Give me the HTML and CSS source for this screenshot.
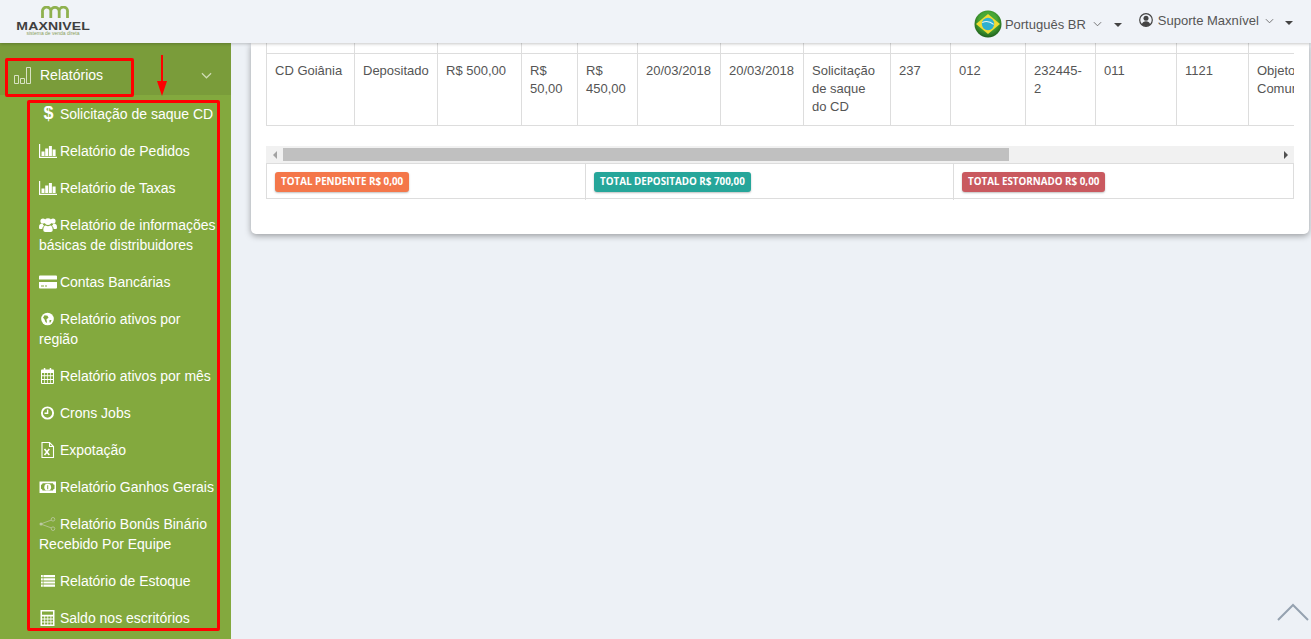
FILE: index.html
```html
<!DOCTYPE html>
<html lang="pt-BR">
<head>
<meta charset="utf-8">
<title>Maxnível</title>
<link rel="stylesheet" href="styles.css">
</head>
<body>
<div class="app">
  <header class="topbar">
    <div class="logo">
      <svg class="logo-mark" viewBox="0 0 28 12"><path d="M1.500 12V6a3.800 3.800 0 0 1 8.300-1.500M9.800 12V5.500a4.200 4.200 0 0 1 8.400 0V12M18.200 4.500A3.800 3.800 0 0 1 26.500 6v6" fill="none" stroke="#8fb14f" stroke-width="2.800"/></svg>
      <span class="logo-name">MAXNIVEL</span>
      <span class="logo-sub">sistema de venda direta</span>
    </div>
    <div class="top-right">
      <div class="top-item lang">
        <svg class="flag" viewBox="0 0 28 28"><defs><radialGradient id="flagbg" cx="50%" cy="40%" r="60%"><stop offset="55%" stop-color="#49a835"/><stop offset="100%" stop-color="#1f5f1c"/></radialGradient></defs><circle cx="14" cy="14" r="13.500" fill="url(#flagbg)"/><path d="M14 4 26 14 14 24 2 14z" fill="#f0dc33"/><circle cx="14" cy="14" r="6.200" fill="#2fb0cf"/><path d="M8.200 12.500c3.500-1.500 8-1 11.400 1.800" fill="none" stroke="#e8f6f4" stroke-width="1.100"/></svg>
        <span>Português BR</span>
        <svg class="chev-sm" viewBox="0 0 10 6"><path d="M1 1l4 4 4-4" fill="none" stroke="currentColor"/></svg>
        <span class="caret"></span>
      </div>
      <div class="top-item user">
        <svg class="user-ico" viewBox="0 0 14 14"><circle cx="7" cy="7" r="6.300" fill="none" stroke="#444" stroke-width="1.200"/><circle cx="7" cy="5.300" r="2.500" fill="#444"/><path d="M2.700 11.500c.7-2.600 2.500-3.300 4.300-3.300s3.600.7 4.300 3.300a6 6 0 0 1-8.600 0z" fill="#444"/></svg>
        <span>Suporte Maxnível</span>
        <svg class="chev-sm" viewBox="0 0 10 6"><path d="M1 1l4 4 4-4" fill="none" stroke="currentColor"/></svg>
        <span class="caret"></span>
      </div>
    </div>
  </header>
  <div class="layout">
    <aside class="sidebar">
      <div class="menu-head">
        <svg class="head-ico" viewBox="0 0 17 17"><path d="M.5 8.500h4v8h-4zM6.500 11.500h4v5h-4zM12.500 .5h4v16h-4z" fill="none" stroke="#d9e2c4"/></svg>
        <span class="head-label">Relatórios</span>
        <svg class="head-chev" viewBox="0 0 12 7"><path d="M1 1l5 5 5-5" fill="none" stroke="#cfdcb3" stroke-width="1.300"/></svg>
      </div>
      <ul class="submenu">
        <li><span class="ico glyph">$</span> Solicitação de saque CD</li>
        <li><svg class="ico" viewBox="0 0 18 14"><path d="M0 0h1.200v12.800H18V14H0zM2.500 7.500h3V12h-3zM6.200 4.500h3V12h-3zM9.900 2h3v10h-3zM13.600 5.500h3V12h-3z"/></svg> Relatório de Pedidos</li>
        <li><svg class="ico" viewBox="0 0 18 14"><path d="M0 0h1.200v12.800H18V14H0zM2.500 7.500h3V12h-3zM6.200 4.500h3V12h-3zM9.900 2h3v10h-3zM13.600 5.500h3V12h-3z"/></svg> Relatório de Taxas</li>
        <li><svg class="ico" viewBox="0 0 18 14"><circle cx="4" cy="3" r="2.600"/><circle cx="14" cy="3" r="2.600"/><circle cx="9" cy="3.600" r="3.400"/><path d="M0 9.500C0 6.500 1 5.500 3.500 5.500c.5 1.300 1 1.800 1.800 2.300C3.800 8.500 3.300 10 3.300 11H1c-.6 0-1-.7-1-1.500zM18 9.500c0-3-1-4-3.500-4-.5 1.300-1 1.800-1.800 2.300 1.500.7 2 2.200 2 3.200H17c.6 0 1-.7 1-1.500zM4.300 12c0-3 1-4.500 2.500-4.500 1.400 1 3 1 4.400 0 1.500 0 2.500 1.500 2.500 4.500 0 1.200-.7 2-2 2H6.300c-1.300 0-2-.8-2-2z"/></svg> Relatório de informações básicas de distribuidores</li>
        <li><svg class="ico" viewBox="0 0 18 14"><path d="M1 .5h16a1 1 0 0 1 1 1v3H0v-3a1 1 0 0 1 1-1zM0 7h18v5.500a1 1 0 0 1-1 1H1a1 1 0 0 1-1-1zm2 3.500v1h3v-1zm4 0v1h2v-1z" fill-rule="evenodd"/></svg> Contas Bancárias</li>
        <li><svg class="ico" viewBox="0 0 18 14"><circle cx="8.500" cy="7" r="6.300"/><path d="M5.500 3.200l3 .5 1 2-2 1.500L8 11 6.500 10 5.300 7 4 5.700zM10.500 8h2l-1 2.500h-1z" fill="#83a93e"/></svg> Relatório ativos por região</li>
        <li><svg class="ico ico-tall" viewBox="0 0 18 16"><path d="M3 1.500h11a1 1 0 0 1 1 1V15a1 1 0 0 1-1 1H3a1 1 0 0 1-1-1V2.500a1 1 0 0 1 1-1z"/><path d="M4.800 0h1.500v3H4.800zM10.700 0h1.500v3h-1.500z"/><path d="M3 5h2.300v2.300H3zm3 0h2.300v2.300H6zm3 0h2.300v2.300H9zm3 0h2v2.300h-2zM3 8.200h2.300v2.800H3zm3 0h2.300v2.800H6zm3 0h2.300v2.800H9zm3 0h2v2.800h-2zM3 12h2.300v3H3zm3 0h2.300v3H6zm3 0h2.300v3H9zm3 0h2v3h-2z" fill="#83a93e"/></svg> Relatório ativos por mês</li>
        <li><svg class="ico" viewBox="0 0 18 14"><circle cx="8.500" cy="7" r="5.600" fill="none" stroke="currentColor" stroke-width="1.900"/><path d="M9.300 3.500v4.500H5.500V6.600h2.400V3.500z"/></svg> Crons Jobs</li>
        <li><svg class="ico ico-tall" viewBox="0 0 18 16"><path d="M3 .5h7.500l4 4v11H3zM10.500 .5v4h4" fill="none" stroke="currentColor" stroke-width="1.100"/><path d="M5.500 7l4.800 6M10.300 7l-4.800 6" stroke="currentColor" stroke-width="1.600"/></svg> Expotação</li>
        <li><svg class="ico" viewBox="0 0 18 14"><path d="M.5 1.500h16.500V13H.5zm3 1.800c0 1-1 1.500-1.500 1.500v4c.7 0 1.500.7 1.500 1.800h10.500c0-1.100.8-1.800 1.500-1.800v-4c-.5 0-1.500-.5-1.500-1.500z" fill-rule="evenodd"/><circle cx="8.700" cy="7.200" r="3.400"/><path d="M8.200 5.200h1v4h-1z" fill="#83a93e"/></svg> Relatório Ganhos Gerais</li>
        <li><svg class="ico ico-muted" viewBox="0 0 18 14"><circle cx="14" cy="2.300" r="1.800" fill="none" stroke="currentColor" stroke-width=".8"/><circle cx="14" cy="11.700" r="1.800" fill="none" stroke="currentColor" stroke-width=".8"/><circle cx="2" cy="7" r="1.500"/><path d="M3 6.500l9.500-3.500M3 7.500l9.500 3.500" stroke="currentColor" stroke-width=".8"/></svg> Relatório Bonûs Binário Recebido Por Equipe</li>
        <li><svg class="ico" viewBox="0 0 18 14"><path d="M2 1h1.800v2.200H2zM4.400 1H16v2.200H4.400zM2 4.200h1.800v2.200H2zM4.400 4.200H16v2.200H4.400zM2 7.400h1.800v2.200H2zM4.400 7.400H16v2.200H4.400zM2 10.600h1.800v2.200H2zM4.400 10.600H16v2.200H4.400z"/></svg> Relatório de Estoque</li>
        <li><svg class="ico ico-tall" viewBox="0 0 18 16"><path d="M1.500 0h14v16h-14z"/><path d="M3 1.500h11v3.300H3zM3 6.500h2.300v2H3zm3.100 0h2.300v2H6.100zm3.100 0h2.300v2H9.200zm3.100 0H14v2h-1.700zM3 9.500h2.300v2H3zm3.100 0h2.300v2H6.100zm3.100 0h2.300v2H9.200zm3.100 0H14v2h-1.700zM3 12.500h2.300v2H3zm3.100 0h2.300v2H6.100zm3.100 0h2.300v2H9.200zm3.100 0H14v2h-1.700z" fill="#83a93e"/></svg> Saldo nos escritórios</li>
      </ul>
    </aside>
    <main class="content">
      <section class="card">
        <div class="table-clip">
          <table class="data">
            <colgroup><col><col><col><col><col><col><col><col><col><col><col><col><col><col></colgroup>
            <tbody>
              <tr class="stub"><td></td><td></td><td></td><td></td><td></td><td></td><td></td><td></td><td></td><td></td><td></td><td></td><td></td><td></td></tr>
              <tr>
                <td>CD Goiânia</td><td>Depositado</td><td>R$ 500,00</td><td>R$ 50,00</td><td>R$ 450,00</td><td>20/03/2018</td><td>20/03/2018</td><td>Solicitação de saque do CD</td><td>237</td><td>012</td><td>232445-2</td><td>011</td><td>1121</td><td>Objeto Comum</td>
              </tr>
            </tbody>
          </table>
        </div>
        <div class="hscroll">
          <span class="arrow arrow-l"></span>
          <div class="track"><div class="thumb"></div></div>
          <span class="arrow arrow-r"></span>
        </div>
        <div class="totals">
          <div class="total-cell"><span class="badge orange">TOTAL PENDENTE R$ 0,00</span></div>
          <div class="total-cell"><span class="badge teal">TOTAL DEPOSITADO R$ 700,00</span></div>
          <div class="total-cell"><span class="badge red">TOTAL ESTORNADO R$ 0,00</span></div>
        </div>
      </section>
    </main>
  </div>
</div>
<div class="mark mark-head"></div>
<div class="mark mark-list"></div>
<svg class="mark-arrow" viewBox="0 0 10 41"><path d="M4 0h2v26h4L5 41 0 26h4z" fill="#f00"/></svg>
<svg class="to-top" viewBox="0 0 32 18"><path d="M1 17 16 2l15 15" fill="none" stroke="#95a2b0" stroke-width="2"/></svg>
</body>
</html>
```
FILE: styles.css
```css
* { box-sizing: border-box; }
html, body { height: 100%; }
body {
  margin: 0;
  overflow: hidden;
  background: #edf1f6;
  color: #555;
  font-family: "Liberation Sans", Arial, sans-serif;
  font-size: 14px;
}
.app { display: flex; flex-direction: column; height: 100vh; }

.topbar {
  position: relative;
  z-index: 5;
  flex: 0 0 43px;
  display: flex;
  justify-content: space-between;
  background: #f0f3f8;
  box-shadow: 0 1px 3px rgba(0, 0, 0, .22);
}
.logo {
  width: 74px;
  margin-left: 16px;
  display: flex;
  flex-direction: column;
  align-items: center;
  padding-top: 6px;
}
.logo-mark { width: 28px; height: 12px; display: block; margin-left: 3px; }
.logo-name {
  font-weight: 700;
  font-size: 11.5px;
  line-height: 10px;
  margin-top: 3px;
  letter-spacing: .1px;
  color: #3f3f3f;
  transform: scaleX(1.22);
  white-space: nowrap;
}
.logo-sub { font-size: 5px; line-height: 4px; color: #8a9f5a; white-space: nowrap; }

.top-right { display: flex; padding-right: 18px; }
.top-item { display: flex; align-items: center; color: #555; font-size: 13px; }
.lang { padding-top: 5px; margin-right: 17px; height: 43px; }
.flag { width: 28px; height: 28px; margin-right: 3px; }
.chev-sm { width: 9px; height: 6px; margin-left: 7px; color: #666; }
.caret {
  width: 0;
  height: 0;
  margin-left: 12px;
  margin-top: 2px;
  border: 4px solid transparent;
  border-top-color: #444;
  border-bottom: 0;
}
.user { align-items: flex-start; padding-top: 13px; }
.user-ico { width: 14px; height: 14px; margin-right: 5px; }
.user .chev-sm { margin-top: 5px; margin-left: 6px; }
.user .caret { margin-top: 8px; margin-left: 11px; }

.layout { flex: 1; display: flex; min-height: 0; }
.sidebar { flex: 0 0 231px; background: #83a93e; color: #fff; overflow: hidden; }
.menu-head {
  height: 52px;
  padding: 14px 19px 0 14px;
  display: flex;
  align-items: flex-start;
  background: #7a9c3a;
}
.head-ico { width: 17px; height: 17px; margin-top: 10px; }
.head-label { margin-left: 9px; margin-top: 8px; line-height: 20px; flex: 1; }
.head-chev { width: 11px; height: 7px; margin-top: 15px; }

.submenu { list-style: none; margin: 1px 0 0; padding: 0 10px 0 39px; }
.submenu li { padding: 8px 0 9px; line-height: 20px; }
.ico {
  display: inline-block;
  width: 18px;
  height: 14px;
  margin-right: -1px;
  vertical-align: -2px;
  fill: currentColor;
}
.ico-tall { height: 16px; vertical-align: -3px; }
.glyph {
  text-align: center;
  font-weight: 700;
  font-size: 18px;
  line-height: 14px;
  padding-left: 1px;
  vertical-align: 0;
}
.ico-muted { color: #bdc9a3; }

.content { flex: 1; padding: 0 2px 0 20px; min-width: 0; }
.card {
  background: #fff;
  height: 191px;
  padding: 0 15px;
  border-radius: 0 0 5px 5px;
  box-shadow: 0 2px 6px rgba(0, 0, 0, .35);
}
.table-clip { overflow: hidden; }
.data {
  table-layout: fixed;
  width: 1082px;
  border-collapse: separate;
  border-spacing: 0;
  font-size: 13px;
  line-height: 18px;
  color: #555;
}
.data td {
  padding: 8px 8px 9px;
  vertical-align: top;
  border-left: 1px solid #ddd;
  border-bottom: 1px solid #ddd;
}
.data .stub td { height: 11px; padding: 0; }
.data col:nth-child(1) { width: 88px; }
.data col:nth-child(2) { width: 83px; }
.data col:nth-child(3) { width: 84px; }
.data col:nth-child(4) { width: 56px; }
.data col:nth-child(5) { width: 60px; }
.data col:nth-child(6) { width: 83px; }
.data col:nth-child(7) { width: 83px; }
.data col:nth-child(8) { width: 87px; }
.data col:nth-child(9) { width: 60px; }
.data col:nth-child(10) { width: 75px; }
.data col:nth-child(11) { width: 70px; }
.data col:nth-child(12) { width: 81px; }
.data col:nth-child(13) { width: 72px; }
.data col:nth-child(14) { width: 100px; }

.hscroll {
  margin-top: 20px;
  height: 17px;
  background: #f1f1f1;
  display: flex;
  align-items: center;
}
.arrow { flex: 0 0 17px; display: flex; justify-content: center; }
.arrow::before {
  content: "";
  border: 4px solid transparent;
  border-left-width: 0;
  border-right-color: #a3a3a3;
}
.arrow-r::before {
  border-right-width: 0;
  border-left-width: 4px;
  border-right-color: transparent;
  border-left-color: #505050;
}
.track { flex: 1; height: 13px; }
.thumb { width: 726px; height: 13px; background: #c0c0c0; }

.totals {
  display: grid;
  grid-template-columns: 318px 368px 1fr;
  height: 36px;
  border: 1px solid #ddd;
}
.total-cell { padding: 8px; border-left: 1px solid #ddd; }
.total-cell:first-child { border-left: 0; }
.badge {
  display: inline-block;
  height: 20px;
  padding: 0 6px;
  border-radius: 3px;
  color: #fff;
  font-family: "Open Sans", sans-serif;
  font-weight: 700;
  font-size: 9.8px;
  line-height: 20px;
  white-space: nowrap;
  box-shadow: 0 1px 2px rgba(0, 0, 0, .25);
}
.orange { background: #f4774a; }
.teal { background: #26a69a; }
.red { background: #c9595f; }

.mark { position: absolute; border: 3px solid #f00; border-radius: 2px; z-index: 6; }
.mark-head { left: 5px; top: 58px; width: 129px; height: 39px; }
.mark-list { left: 27px; top: 100px; width: 193px; height: 531px; }
.mark-arrow { position: absolute; left: 157px; top: 55px; width: 10px; height: 41px; z-index: 6; }
.to-top { position: absolute; left: 1277px; top: 603px; width: 32px; height: 18px; }
```
